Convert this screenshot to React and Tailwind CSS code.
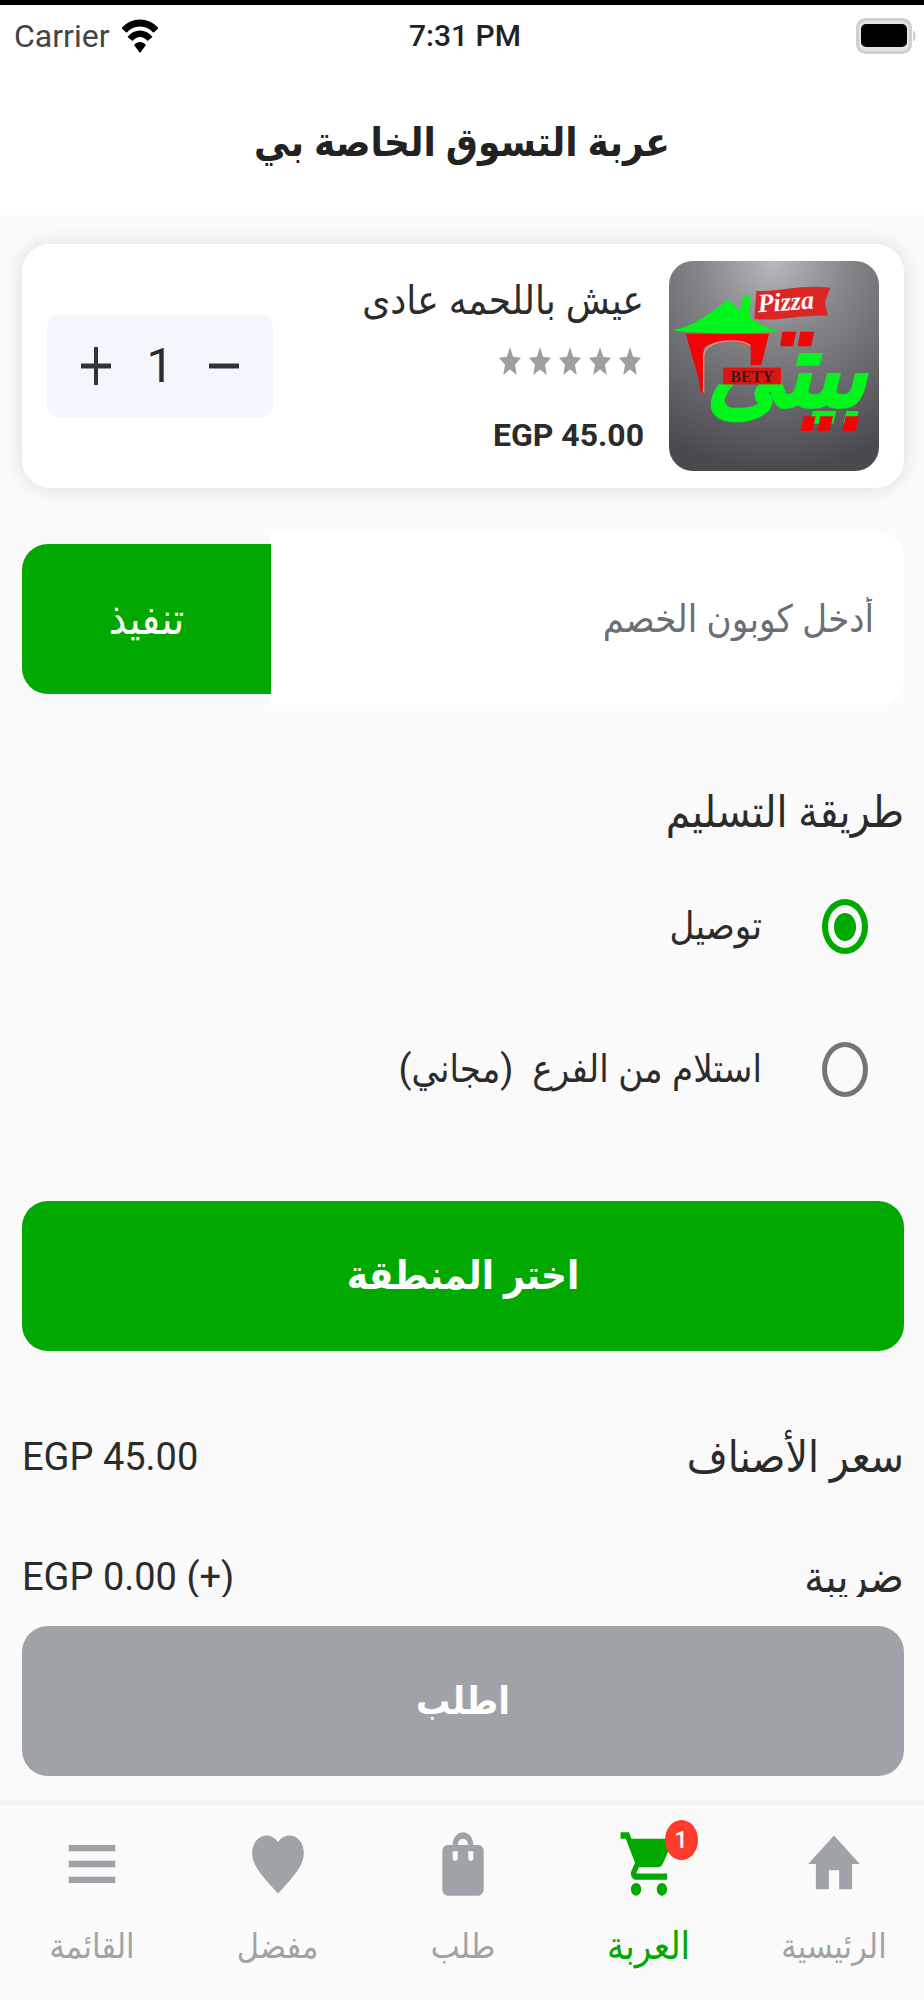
import React, { useState } from 'react';
import { MdHome, MdShoppingCart, MdShoppingBag, MdFavorite, MdMenu } from 'react-icons/md';

const PRICE = 45;

const navItems = [
    { id: 'home', label: 'الرئيسية', icon: MdHome },
    { id: 'cart', label: 'العربة', icon: MdShoppingCart },
    { id: 'orders', label: 'طلب', icon: MdShoppingBag },
    { id: 'favorites', label: 'مفضل', icon: MdFavorite },
    { id: 'menu', label: 'القائمة', icon: MdMenu },
];

const deliveryOptions = [
    { id: 'delivery', label: 'توصيل' },
    { id: 'pickup', label: 'استلام من الفرع  (مجاني)' },
];

const StatusBar = () => (
    <div dir="ltr" className="grid grid-cols-3 items-center h-[66px] pl-[14px] pr-2 border-t-[5px] border-black text-[32px] text-[#444]">
        <div className="flex items-center gap-3">
            <span>Carrier</span>
            <svg viewBox="0 0 36 34" className="w-9 h-[34px]" fill="none" stroke="#000">
                <path d="M2 11.500C11 1.500 25 1.500 34 11.500" strokeWidth="7" />
                <path d="M8 20C14 13 22 13 28 20" strokeWidth="6.500" />
                <path d="M18 34l-6-8c3.500-4 8.500-4 12 0z" fill="#000" stroke="none" />
            </svg>
        </div>
        <span className="text-center text-[30px] font-medium text-[#222]">7:31 PM</span>
        <svg viewBox="0 0 60 36" className="w-[60px] h-9 justify-self-end">
            <rect x="1.500" y="1.500" width="53" height="33" rx="8" fill="#e4e4e4" stroke="#cfcfcf" strokeWidth="3" />
            <rect x="5" y="6" width="46" height="23" rx="5" fill="#000" />
            <path d="M57 12c3.500 2 3.500 10 0 12z" fill="#cfcfcf" />
        </svg>
    </div>
);

const ProductImage = () => (
    <svg viewBox="0 0 630 630" className="w-[210px] h-[210px] shrink-0 rounded-3xl" role="img" aria-label="Pizza Bety">
        <defs>
            <radialGradient id="metal" cx="0.5" cy="0" r="1">
                <stop offset="0" stopColor="#b9b9bd" />
                <stop offset="0.35" stopColor="#85858a" />
                <stop offset="1" stopColor="#4a4a4e" />
            </radialGradient>
        </defs>
        <rect width="630" height="630" fill="url(#metal)" />
        <path d="M50 218H300L277 312H245V262C240 235 120 235 104 262V400C90 390 92 370 88 350Z" fill="#f00606" />
        <path d="M104 395V285C104 235 215 228 245 255" fill="none" stroke="#ff8a80" strokeWidth="4" />
        <path d="M12 206C80 196 130 150 177 116L213 150L220 116C226 98 247 100 245 120L240 166C265 188 295 202 328 208C300 220 40 220 12 206Z" fill="#00f51c" />
        <path d="M262 90C330 92 400 70 484 80L468 122L476 164C400 160 330 182 256 174Z" fill="#dc2626" />
        <text x="352" y="148" textAnchor="middle" fontSize="78" fontWeight="700" fontStyle="italic" fill="#fff" className="font-['Liberation_Serif',serif]" transform="rotate(-4 352 148)">Pizza</text>
        <text x="352" y="435" textAnchor="middle" fontSize="310" fontWeight="700" fontStyle="italic" fill="#00f51c" stroke="#00f51c" strokeWidth="6" className="font-['DejaVu_Sans_Condensed','DejaVu_Sans',sans-serif]">بيتى</text>
        <path d="M340 212H382L372 256H334ZM394 212H436L426 256H386Z" fill="#f00606" />
        <path d="M404 466H440L430 510H394ZM454 466H492L482 510H446ZM530 466H570L560 510H520Z" fill="#f00606" />
        <rect x="162" y="320" width="174" height="50" fill="#dc1414" />
        <text x="249" y="362" textAnchor="middle" fontSize="48" fontWeight="700" fill="#3a1d1d" className="font-['Liberation_Serif',serif]">BETY</text>
    </svg>
);

const Stars = () => (
    <div className="flex items-center gap-2 h-10 px-[3px]">
        {[1, 2, 3, 4, 5].map((n) => (
            <svg key={n} viewBox="2 2 20 19" preserveAspectRatio="none" className="w-[22px] h-7 fill-[#9e9e9e]">
                <path d="M12 17.270L18.180 21l-1.640-7.030L22 9.240l-7.190-.61L12 2 9.190 8.630 2 9.240l5.460 4.730L5.820 21z" />
            </svg>
        ))}
    </div>
);

export default function App() {
    const [quantity, setQuantity] = useState(1);
    const [coupon, setCoupon] = useState('');
    const [delivery, setDelivery] = useState('delivery');
    const [activeTab, setActiveTab] = useState('cart');

    const total = `EGP ${(PRICE * quantity).toFixed(2)}`;

    return (
        <div dir="rtl" className="flex flex-col h-screen bg-[#fafafa] text-[#2b2b2b] font-[Roboto,'DejaVu_Sans_Condensed','DejaVu_Sans',sans-serif]">
            <header className="bg-white">
                <StatusBar />
                <h1 className="h-[149px] leading-[154px] text-center text-[40px] font-bold text-[#222]">عربة التسوق الخاصة بي</h1>
            </header>

            <main className="flex-1 min-h-0 overflow-y-auto [scrollbar-width:none] pl-[22px] pr-5 pt-[29px]">
                <section className="flex items-center px-[25px] py-[17px] bg-white rounded-[28px] shadow-[0_0_20px_rgba(0,0,0,0.12)]">
                    <ProductImage />
                    <div className="flex flex-col self-stretch mr-[25px]">
                        <h2 className="leading-[80px] text-[40px]">عيش باللحمه عادى</h2>
                        <Stars />
                        <p dir="ltr" className="mt-auto leading-[72px] text-right text-[32px] font-bold">EGP 45.00</p>
                    </div>
                    <div className="flex items-center justify-between w-[226px] h-[102px] mr-auto px-[34px] bg-[#f3f7fd] rounded-xl">
                        <button aria-label="إنقاص" onClick={() => setQuantity(Math.max(1, quantity - 1))}>
                            <svg viewBox="0 0 30 38" className="w-[30px] h-[38px]" stroke="#333" strokeWidth="5">
                                <path d="M0 19h30" />
                            </svg>
                        </button>
                        <span className="text-[48px]">{quantity}</span>
                        <button aria-label="زيادة" onClick={() => setQuantity(quantity + 1)}>
                            <svg viewBox="0 0 30 38" className="w-[30px] h-[38px]" stroke="#333">
                                <path d="M0 19h30" strokeWidth="5" />
                                <path d="M15 0v38" strokeWidth="4" />
                            </svg>
                        </button>
                    </div>
                </section>

                <form className="flex items-center mt-11" onSubmit={(e) => e.preventDefault()}>
                    <input
                        type="text"
                        aria-label="كوبون الخصم"
                        placeholder="أدخل كوبون الخصم"
                        className="flex-1 min-w-0 h-[173px] px-[30px] bg-white rounded-r-3xl leading-[70px] text-[38px] placeholder:text-[#6b6f75] focus:outline-none"
                        value={coupon}
                        onChange={(e) => setCoupon(e.target.value)}
                    />
                    <button type="submit" className="w-[249px] h-[150px] bg-[#00a800] rounded-l-[26px] text-[44px] text-white">
                        تنفيذ
                    </button>
                </form>

                <fieldset className="mt-[72px]">
                    <legend className="mb-2 leading-[70px] text-[44px]">طريقة التسليم</legend>
                    {deliveryOptions.map((option) => (
                        <label key={option.id} className="flex items-center gap-[60px] h-[143px] pr-9 text-[38px] whitespace-pre">
                            <input
                                type="radio"
                                name="delivery"
                                checked={delivery === option.id}
                                onChange={() => setDelivery(option.id)}
                                className="appearance-none grid place-content-center w-[46px] h-[55px] rounded-[50%] border-[5px] border-[#757575] checked:border-[6px] checked:border-[#00a800] before:w-[22px] before:h-7 before:rounded-[50%] checked:before:bg-[#00a800]"
                            />
                            {option.label}
                        </label>
                    ))}
                </fieldset>

                <button className="w-full h-[150px] mt-[60px] bg-[#00a800] rounded-[26px] text-[40px] font-bold text-white">
                    اختر المنطقة
                </button>

                <dl className="mt-[46px]">
                    <div className="flex items-center justify-between h-[120px]">
                        <dt className="text-[44px]">سعر الأصناف</dt>
                        <dd dir="ltr" className="text-[38px]">{total}</dd>
                    </div>
                    <div className="flex items-center justify-between h-[120px]">
                        <dt className="text-[44px]">ضريبة</dt>
                        <dd dir="ltr" className="text-[38px]">EGP 0.00 (+)</dd>
                    </div>
                </dl>
            </main>

            <footer>
                <div className="pl-[22px] pr-5 pt-[29px] pb-6">
                    <button className="w-full h-[150px] bg-[#9fa3a8] rounded-[26px] text-[38px] font-bold text-white">
                        اطلب
                    </button>
                </div>
                <nav className="flex justify-between h-[200px] pt-[21px] pl-[2px] border-t-[5px] border-[#f3f3f3]">
                    {navItems.map(({ id, label, icon: Icon }) => (
                        <a
                            key={id}
                            href={`#${id}`}
                            onClick={() => setActiveTab(id)}
                            className={`flex flex-col items-center w-[180px] ${activeTab === id ? 'text-[#00a800] text-[38px]' : 'text-[#9fa3a8] text-[34px]'}`}
                        >
                            <span className="relative">
                                <Icon preserveAspectRatio="none" className="w-[62px] h-[76px]" />
                                {id === 'cart' && (
                                    <span className="absolute -top-[6px] -right-[18px] w-[33px] h-10 rounded-[50%] bg-[#ff3b2b] text-center text-[24px] leading-10 font-medium text-white">
                                        {quantity}
                                    </span>
                                )}
                            </span>
                            <span className="mt-4 leading-[56px]">{label}</span>
                        </a>
                    ))}
                </nav>
            </footer>
        </div>
    );
}
